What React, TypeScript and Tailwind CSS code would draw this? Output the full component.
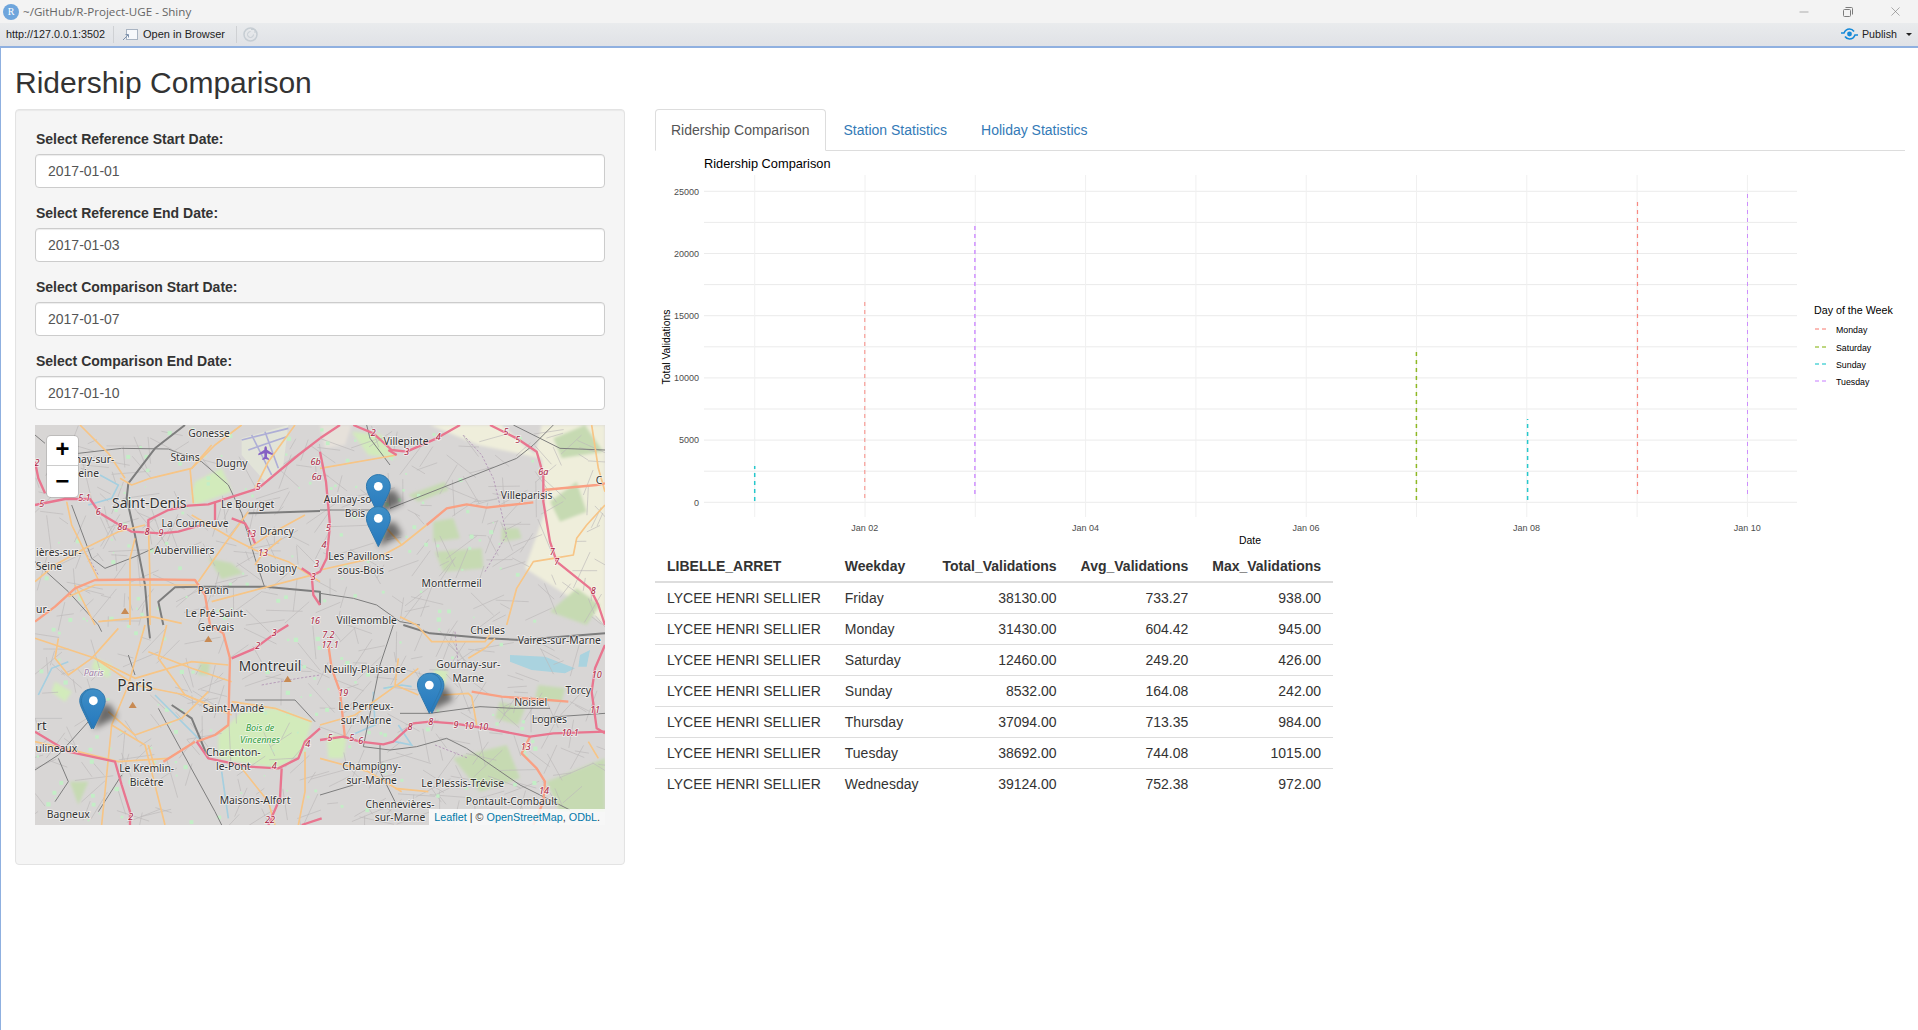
import { Minus, X } from "lucide-react";

const fields = [
  { label: "Select Reference Start Date:", value: "2017-01-01" },
  { label: "Select Reference End Date:", value: "2017-01-03" },
  { label: "Select Comparison Start Date:", value: "2017-01-07" },
  { label: "Select Comparison End Date:", value: "2017-01-10" },
];

const rows = [
  ["Friday", "38130.00", "733.27", "938.00"],
  ["Monday", "31430.00", "604.42", "945.00"],
  ["Saturday", "12460.00", "249.20", "426.00"],
  ["Sunday", "8532.00", "164.08", "242.00"],
  ["Thursday", "37094.00", "713.35", "984.00"],
  ["Tuesday", "38692.00", "744.08", "1015.00"],
  ["Wednesday", "39124.00", "752.38", "972.00"],
];

// map is traced at 3x: viewBox 1710 x 1200 for a 570 x 400 box
const cream = "1185,0 1400,0 1500,90 1520,0 1710,0 1710,600 1640,540 1470,430 1530,260 1520,100 1330,60";

const forest = [
  "520,400 590,415 625,445 560,462",
  "1195,290 1255,280 1275,340 1195,350",
  "1200,380 1340,370 1345,430 1225,440",
  "1120,210 1230,170 1240,195 1150,230",
  "1555,40 1650,0 1705,80 1580,100",
  "1545,230 1625,170 1655,260 1575,290",
  "1625,490 1695,540 1655,600 1545,560",
  "1400,310 1450,310 1460,340 1400,350",
  "1255,1000 1415,960 1455,1060 1335,1100",
  "1535,1070 1710,1000 1710,1160 1575,1160",
  "1510,780 1590,790 1580,830 1500,820",
  "1395,830 1470,850 1450,900 1380,880",
  "495,710 525,715 520,750 490,750",
  "105,1070 160,1070 130,1140",
];

const parks = [
  "620,860 720,850 830,890 800,990 725,1030 550,1000 550,930",
  "470,210 480,170 560,130 590,200 480,240",
  "950,20 1040,30 1080,100 1000,90",
  "875,930 935,935 925,1000 880,1000",
  "1200,730 1240,740 1225,790 1190,780",
  "180,700 230,720 220,760 170,730",
  "60,770 110,800 90,830 50,800",
];

const waterLines = [
  "195,150 250,180 230,220 160,240",
  "1015,800 1020,900 950,930",
  "560,1040 580,1180",
  "10,810 50,730 100,710",
  "1045,790 1100,780 1130,785",
  "1080,950 1130,960 1090,900",
  "360,810 420,870 500,950",
];

const orange = [
  "135,0 220,85 270,160",
  "530,60 470,130 345,160 290,180 255,160",
  "465,130 475,235",
  "620,0 540,60 470,130",
  "95,230 110,300 130,340 190,465",
  "340,290 345,465 345,600",
  "285,600 285,400 300,340",
  "0,470 60,420 150,370 250,320 330,300",
  "490,470 560,370 640,260",
  "470,270 590,340 660,375 760,410 855,470",
  "780,0 700,110 660,190",
  "740,340 680,390 660,420",
  "810,270 700,330 640,370",
  "530,530 850,445",
  "100,515 180,480 350,480 490,480",
  "190,590 350,575 440,595",
  "120,480 180,600",
  "855,130 1085,90",
  "855,435 1035,395 1100,360 1175,300",
  "1055,310 1100,360",
  "1710,240 1655,300 1625,340 1615,390 1555,400 1495,410 1445,490 1415,600",
  "1670,0 1690,130 1710,200",
  "1095,575 1145,600 1190,650 1350,650 1370,620",
  "0,640 180,700 300,760 470,710 580,720",
  "70,640 60,700 100,750 170,700 250,610",
  "330,600 280,780 230,900 200,1200",
  "590,870 450,810 300,780 180,700",
  "220,860 300,930 440,880 520,800",
  "230,900 330,960 390,1200",
  "0,950 130,980 250,1010 400,1000 480,950",
  "340,960 360,1030",
  "525,840 450,810 370,700 395,600",
  "590,770 470,730 340,680",
  "590,830 720,850 830,890",
  "620,1030 700,1130 720,1200",
  "810,980 810,1100 790,1200",
  "855,900 960,870 1100,770 1150,730",
  "1090,700 1080,780 1150,810",
  "855,1000 1000,1040 1100,1100",
  "1080,1090 1180,1100",
  "1225,810 1300,805 1310,815 1325,900",
  "1380,640 1350,670 1300,700",
  "1660,950 1690,1000",
];

const salmon = [
  "0,590 60,545 120,490 180,465 350,463 480,465 510,510 525,600 565,625",
  "1175,300 1235,250 1295,238 1355,248 1495,232",
  "1525,195 1685,180 1710,175",
  "385,1010 480,950",
  "565,625 585,700 580,900 540,930 485,950",
  "1310,800 1400,815 1540,825 1600,830",
  "1485,935 1460,985 1505,1030 1530,1070 1525,1130 1495,1200",
  "880,660 890,730 915,800 930,940",
];

const pink = [
  "0,110 10,160 30,205",
  "0,240 90,222 165,222 195,265 245,295 290,320 380,325 430,320 500,300",
  "340,320 340,285 400,255 460,242 520,238 670,190 790,90 855,40",
  "540,230 540,285",
  "590,280 630,295 650,330 660,355",
  "800,430 830,450 835,510 855,540",
  "855,80 873,170 885,300 875,400 855,440 835,450",
  "855,40 915,0",
  "955,0 1015,25 1070,75 1115,80 1205,40 1275,0",
  "1365,0 1445,40 1505,80 1525,150 1525,230 1545,350 1565,410 1665,490 1690,540 1710,600",
  "1710,660 1680,730 1670,800 1685,910 1710,925",
  "855,945 925,935 975,950 1045,958 1075,950 1135,895 1185,890 1255,895 1365,912 1485,935 1555,925 1710,920",
  "590,700 660,670 720,625 760,600",
  "0,920 100,980 240,1010 260,1080 285,1160 285,1200",
  "485,950 520,1000 640,1025 730,1030 790,1000 810,950 855,910",
  "740,1030 735,1120 700,1200",
  "860,1180 800,1200",
  "1085,90 1060,75",
];

const rail = [
  "0,30 30,55",
  "130,85 260,70 400,72 500,110 580,180 620,265",
  "355,370 300,395 210,430 170,400 110,240",
  "620,265 660,400 690,490",
  "0,410 100,500 190,600 200,620",
  "1555,0 1495,60 1445,100 1065,250",
  "855,255 1055,255",
  "1065,120 1005,40 995,0",
  "855,505 955,520 1025,540 1095,590 1155,600",
  "1435,0 1575,70 1710,75",
  "280,690 300,750",
  "370,850 540,1160 560,1200",
  "630,825 780,825 840,890",
  "160,890 70,990 0,1035",
  "70,1000 100,1070 60,1130",
  "260,1050 190,1160",
  "1095,865 1185,865 1335,845 1435,850 1545,850",
  "985,965 1065,975 1145,965 1235,940 1295,970 1455,1080 1605,1155",
  "855,1110 955,1080",
  "1075,600 1035,720 985,965",
  "1035,960 1035,1040 1085,1140",
  "1495,880 1710,865",
];

const railThick = [
  "450,0 360,70 280,175 275,220 300,330 330,480 340,600 345,640",
  "385,600 370,530 420,487 490,485 690,485 855,500 855,540",
  "640,265 855,258",
  "410,840 470,880 520,1000",
  "1105,600 1185,625 1355,640 1455,645 1710,625",
];

const boundary = [
  "1285,30 1340,90 1375,160 1390,220 1415,330 1350,440",
  "150,380 190,450",
  "1260,620 1270,720",
  "680,780 790,760 855,750",
  "1200,960 1300,1000",
];

const places: [string, number, number, number?][] = [
  ["Gonesse", 522, 25], ["Stains", 450, 97], ["Dugny", 590, 115],
  ["Saint-Denis", 343, 235, 42], ["Le Bourget", 638, 238], ["La Courneuve", 480, 295],
  ["Drancy", 725, 320], ["Aubervilliers", 448, 375], ["Seine", 42, 423], ["Bobigny", 725, 430],
  ["Pantin", 535, 495], ["Le Pré-Saint-", 543, 565], ["Gervais", 543, 608], ["ur-", 24, 553],
  ["Villepinte", 1113, 48], ["Aulnay-sous-", 960, 222], ["Bois", 960, 265],
  ["Villeparisis", 1475, 210], ["Les Pavillons-", 977, 395], ["sous-Bois", 977, 437],
  ["Montfermeil", 1250, 475], ["Villemomble", 995, 585], ["C", 1692, 165],
  ["Paris", 300, 780, 46], ["Montreuil", 705, 722, 41], ["Saint-Mandé", 595, 850],
  ["rt", 20, 900, 38], ["ulineaux", 64, 970], ["Charenton-", 595, 983], ["le-Pont", 595, 1025],
  ["Le Kremlin-", 335, 1030], ["Bicêtre", 335, 1072], ["Maisons-Alfort", 660, 1125], ["Bagneux", 100, 1168],
  ["Chelles", 1358, 615], ["Vaires-sur-Marne", 1573, 647], ["Gournay-sur-", 1300, 718], ["Marne", 1300, 760],
  ["Neuilly-Plaisance", 990, 732], ["Le Perreux-", 993, 845], ["sur-Marne", 993, 887],
  ["Noisiel", 1487, 832], ["Torcy", 1630, 795], ["Lognes", 1543, 882],
  ["Champigny-", 1010, 1025], ["sur-Marne", 1010, 1066], ["Le Plessis-Trévise", 1283, 1075],
  ["Pontault-Combault", 1430, 1130], ["Chennevières-", 1095, 1138], ["sur-Marne", 1095, 1178],
];

const shields: [string, number, number][] = [
  ["2", 6, 115], ["5", 20, 237], ["5.1", 148, 218], ["6", 190, 262], ["8a", 262, 305], ["8", 336, 322],
  ["9", 378, 325], ["13", 648, 328], ["13", 684, 385], ["5", 670, 187], ["3", 845, 418], ["3", 835, 455],
  ["6b", 842, 110], ["6a", 845, 155], ["16", 840, 588], ["2", 1015, 25], ["4", 1210, 35], ["3", 1115, 80],
  ["5", 1413, 22], ["5", 1448, 45], ["6a", 1525, 142], ["5", 880, 308], ["4", 867, 360], ["7", 1552, 380],
  ["7", 1565, 410], ["8", 1675, 497], ["3", 718, 625], ["2", 668, 662], ["4", 818, 957], ["4", 718, 1022],
  ["22", 705, 1185], ["2", 287, 1175], ["7.2", 880, 630], ["17.1", 885, 660], ["19", 925, 805], ["5", 885, 940],
  ["5", 950, 938], ["6", 977, 948], ["8", 1125, 907], ["8", 1187, 892], ["9", 1263, 900], ["10", 1302, 904],
  ["10", 1345, 907], ["13", 1472, 965], ["14", 1527, 1097], ["10.1", 1605, 925], ["10", 1685, 750], ["11", 1680, 855],
];

// faint street mesh and little green specks, seeded so every run draws the same map
const seeded = (n: number) => {
  let s = 7;
  const out: number[] = [];
  for (let i = 0; i < n; i++) {
    s = (s * 16807) % 2147483647;
    out.push(s / 2147483647);
  }
  return out;
};
const noise = seeded(2400);
const streets = Array.from({ length: 520 }, (_, i) => {
  const x = noise[i * 4] * 1710;
  const y = noise[i * 4 + 1] * 1200;
  const a = noise[i * 4 + 2] * Math.PI;
  const l = 30 + noise[i * 4 + 3] * 90;
  return `M${x} ${y}L${x + Math.cos(a) * l} ${y + Math.sin(a) * l}`;
}).join("");
const specks = Array.from({ length: 230 }, (_, i) => ({
  x: noise[2100 + i] * 1500,
  y: noise[1800 + i] * 1200,
  s: 4 + noise[1500 + i] * 9,
}));

const Pin = ({ x, top }: { x: number; top: number }) => (
  <g transform={`translate(${x - 37.5} ${top}) scale(3)`}>
    <path
      d="M12.5 .6C5.8 .6 .6 5.9 .6 12.4c0 3.4 1.500 6.700 3.200 10.200L12.500 40.600l8.700-18c1.700-3.500 3.200-6.800 3.200-10.200C24.400 5.900 19.200 .6 12.500 .6z"
      fill="url(#pinFill)"
      stroke="#2f78ad"
      strokeWidth="1"
    />
    <circle cx="12.5" cy="12.4" r="4.4" fill="#fff" />
  </g>
);

const PinShadow = ({ x, tip }: { x: number; tip: number }) => (
  <polygon
    points={`${x},${tip} ${x + 22},${tip - 72} ${x + 50},${tip - 74} ${x + 72},${tip - 36}`}
    fill="#000"
    opacity="0.5"
    filter="url(#pinBlur)"
  />
);

const MapTiles = () => (
  <svg viewBox="0 0 1710 1200" className="block h-[400px] w-[570px] font-['Noto_Sans',sans-serif]">
    <defs>
      <linearGradient id="pinFill" x1="0" y1="0" x2="0" y2="1">
        <stop offset="0" stopColor="#3f8fc7" />
        <stop offset="1" stopColor="#2578bd" />
      </linearGradient>
      <filter id="pinBlur" x="-50%" y="-50%" width="200%" height="200%">
        <feGaussianBlur stdDeviation="9" />
      </filter>
      <filter id="soft" x="0" y="0" width="100%" height="100%">
        <feGaussianBlur stdDeviation="1.200" />
      </filter>
      <filter id="softLand" x="0" y="0" width="100%" height="100%">
        <feGaussianBlur stdDeviation="5" />
      </filter>
    </defs>
    <rect width="1710" height="1200" fill="#d8d6d5" />
    <g filter="url(#softLand)">
      <polygon points={cream} fill="#efeedb" />
      <polygon points="855,0 950,0 930,60 870,70" fill="#e6e1da" />
      {forest.map((p) => (
        <polygon key={p} points={p} fill="#c6dab2" />
      ))}
      {parks.map((p) => (
        <polygon key={p} points={p} fill="#d2ebbb" />
      ))}
    </g>
    <g filter="url(#soft)">
      <polygon points="1425,690 1530,695 1620,730 1590,745 1490,735 1425,710" fill="#aad3df" />
      <polygon points="1635,690 1665,675 1655,725 1630,725" fill="#aad3df" />
      <path d={streets} stroke="#bcbab9" strokeWidth="2" fill="none" />
      {specks.map((k, i) => (
        <rect key={i} x={k.x} y={k.y} width={k.s} height={k.s} fill="#c3eec6" />
      ))}
      {waterLines.map((p) => (
        <polyline key={p} points={p} fill="none" stroke="#a5cfe0" strokeWidth="5" />
      ))}
      <polygon points="620,40 760,0 745,120 690,170 620,90" fill="#e2e4d8" />
      <path d="M620 45L760 10M640 75L755 35M650 30L710 150M690 20L730 130" stroke="#aeaed6" strokeWidth="5" />
      <path
        d="M692 64c3 0 4 4 4 10l18 12v5l-18-6v11l6 5v4l-10-3-10 3v-4l6-5V85l-18 6v-5l18-12c0-6 1-10 4-10z"
        fill="#8461c4"
      />
      {boundary.map((p) => (
        <polyline key={p} points={p} fill="none" stroke="#b59bb8" strokeWidth="3" strokeDasharray="7 5" />
      ))}
      {rail.map((p) => (
        <polyline key={p} points={p} fill="none" stroke="#7d7d7d" strokeWidth="3" strokeLinejoin="round" />
      ))}
      {railThick.map((p) => (
        <polyline key={p} points={p} fill="none" stroke="#7d7d7d" strokeWidth="6" strokeLinejoin="round" />
      ))}
      {orange.map((p) => (
        <polyline key={p} points={p} fill="none" stroke="#f7c586" strokeWidth="5" strokeLinejoin="round" />
      ))}
      {salmon.map((p) => (
        <polyline key={p} points={p} fill="none" stroke="#f9a083" strokeWidth="7" strokeLinejoin="round" />
      ))}
      {pink.map((p) => (
        <polyline key={p} points={p} fill="none" stroke="#e9758f" strokeWidth="7" strokeLinejoin="round" />
      ))}
      {[
        [270, 558],
        [520, 642],
        [293, 840],
        [758, 762],
      ].map(([x, y]) => (
        <polygon key={x} points={`${x},${y - 10} ${x + 12},${y + 9} ${x - 12},${y + 9}`} fill="#c88a52" />
      ))}
    </g>
    <g textAnchor="middle" style={{ paintOrder: "stroke" }} stroke="#ffffff" strokeOpacity="0.6" strokeWidth="5">
      {shields.map(([t, x, y]) => (
        <text key={`${t}${x}`} x={x} y={y + 9} fontSize="27" fontStyle="italic" fill="#a8233f">
          {t}
        </text>
      ))}
      {places.map(([t, x, y, size]) => (
        <text key={`${t}${x}`} x={x} y={y + (size ?? 31) * 0.36} fontSize={size ?? 31} fill="#333">
          {t}
        </text>
      ))}
      <text x="238" y="115" textAnchor="end" fontSize="31" fill="#333">
        nay-sur-
      </text>
      <text x="192" y="157" textAnchor="end" fontSize="31" fill="#333">
        eine
      </text>
      <text x="140" y="392" textAnchor="end" fontSize="31" fill="#333">
        ières-sur-
      </text>
      <text x="176" y="754" fontSize="27" fontStyle="italic" fill="#a283a8">
        Paris
      </text>
      <text x="675" y="917" fontSize="27" fontStyle="italic" fill="#2d9a3c">
        Bois de
      </text>
      <text x="675" y="954" fontSize="27" fontStyle="italic" fill="#2d9a3c">
        Vincennes
      </text>
    </g>
    <PinShadow x={1030} tip={270} />
    <PinShadow x={1030} tip={366} />
    <PinShadow x={1183} tip={860} />
    <PinShadow x={175} tip={912} />
    <Pin x={1030} top={147} />
    <Pin x={1030} top={243} />
    <Pin x={1191} top={743} />
    <Pin x={1183} top={743} />
    <Pin x={170} top={790} />
    <Pin x={175} top={790} />
  </svg>
);

const vLines = Array.from({ length: 10 }, (_, i) => 754.7 + i * 110.3);
const hLines = Array.from({ length: 11 }, (_, i) => 502.3 - i * 31.1);

const series = [
  { x: 754.7, y1: 466, y2: 501, color: "#00BFC4", w: 1.5 },
  { x: 864.8, y1: 302, y2: 498, color: "#F8766D", w: 1 },
  { x: 974.9, y1: 226, y2: 494, color: "#C77CFF", w: 1.5 },
  { x: 1416.4, y1: 351, y2: 500, color: "#7CAE00", w: 1.5 },
  { x: 1527.6, y1: 419, y2: 500, color: "#00BFC4", w: 1.5 },
  { x: 1637.5, y1: 202, y2: 494, color: "#F8766D", w: 1.2 },
  { x: 1747.5, y1: 193, y2: 494, color: "#C77CFF", w: 1 },
];

const legend = [
  { name: "Monday", y: 329, color: "#F8766D" },
  { name: "Saturday", y: 347, color: "#7CAE00" },
  { name: "Sunday", y: 364, color: "#00BFC4" },
  { name: "Tuesday", y: 381, color: "#C77CFF" },
];

const RidershipChart = () => (
  <svg viewBox="655 151 1250 400" className="block h-[400px] w-[1250px]">
    <text x="704" y="168" fontSize="12.8" fill="#000">
      Ridership Comparison
    </text>
    {hLines.map((y) => (
      <line key={y} x1="704" x2="1797" y1={y} y2={y} stroke="#ebebeb" strokeWidth="1" />
    ))}
    {vLines.map((x) => (
      <line key={x} x1={x} x2={x} y1="175" y2="517" stroke="#f0f0f0" strokeWidth="1" />
    ))}
    {series.map((s) => (
      <line
        key={s.x}
        x1={s.x}
        x2={s.x}
        y1={s.y2}
        y2={s.y1}
        stroke={s.color}
        strokeOpacity="0.85"
        strokeWidth={s.w}
        strokeDasharray="4 4"
      />
    ))}
    {["0", "5000", "10000", "15000", "20000", "25000"].map((t, i) => (
      <text key={t} x="699" y={502.3 - i * 62.2 + 3.2} textAnchor="end" fontSize="9" fill="#4d4d4d">
        {t}
      </text>
    ))}
    {["Jan 02", "Jan 04", "Jan 06", "Jan 08", "Jan 10"].map((t, i) => (
      <text key={t} x={864.8 + i * 220.6} y="531" textAnchor="middle" fontSize="9" fill="#4d4d4d">
        {t}
      </text>
    ))}
    <text x="1250" y="544" textAnchor="middle" fontSize="10.4" fill="#000">
      Date
    </text>
    <text x="669.5" y="347" textAnchor="middle" fontSize="10.4" fill="#000" transform="rotate(-90 669.5 347)">
      Total Validations
    </text>
    <text x="1814" y="314" fontSize="10.7" fill="#000">
      Day of the Week
    </text>
    {legend.map((l) => (
      <g key={l.name}>
        <line x1="1815" x2="1828" y1={l.y} y2={l.y} stroke={l.color} strokeWidth="1" strokeDasharray="4 3" />
        <text x="1836" y={l.y + 4} fontSize="8.8" fill="#000">
          {l.name}
        </text>
      </g>
    ))}
  </svg>
);

const TitleBar = () => (
  <div className="flex h-[23px] items-center bg-[#f3f3f3] pl-[3px] font-['Open_Sans',sans-serif] text-[11.6px] text-[#666]">
    <div className="flex h-[16px] w-[16px] items-center justify-center rounded-full bg-[#6ea5dc] font-['Liberation_Serif',serif] text-[10px] text-white">
      R
    </div>
    <span className="ml-[4px]">~/GitHub/R-Project-UGE - Shiny</span>
    <div className="ml-auto flex items-center pr-[15px] text-[#7c7c7c]">
      <Minus size={14} strokeWidth={1} />
      <svg width="10" height="10" viewBox="0 0 10 10" className="ml-[32px]">
        <rect x=".5" y="2.5" width="7" height="7" rx="1" fill="none" stroke="currentColor" />
        <path d="M2.500 .5H8.500a1 1 0 0 1 1 1V7.500" fill="none" stroke="currentColor" />
      </svg>
      <X size={15} strokeWidth={1} className="ml-[35px]" />
    </div>
  </div>
);

const ToolBar = () => (
  <div className="flex h-[23px] items-center bg-gradient-to-b from-[#e9ebed] to-[#e0e2e6] pl-[6px] text-[10.8px] text-[#222]">
    <span>http://127.0.0.1:3502</span>
    <div className="ml-[8px] h-[17px] w-px bg-[#cfd1d4]" />
    <svg width="16" height="14" viewBox="0 0 16 14" className="ml-[8px]">
      <rect x="4.5" y="1.5" width="11" height="10" fill="#f6f8fb" stroke="#a9b4c2" />
      <path d="M1 12l5-5M3.500 6.500H6.500V9.500" stroke="#7f93ad" fill="none" />
    </svg>
    <span className="ml-[5px] text-[11px]">Open in Browser</span>
    <div className="ml-[11px] h-[17px] w-px bg-[#cfd1d4]" />
    <svg width="15" height="15" viewBox="0 0 15 15" className="ml-[6px]">
      <circle cx="7.5" cy="7.5" r="6.5" fill="none" stroke="#c6cdd3" strokeWidth="1.5" />
      <path d="M7.500 4.500a3 3 0 1 0 3 3M8 2.500h4V6" fill="none" stroke="#c6cdd3" />
    </svg>
    <div className="ml-auto flex items-center pr-[6px]">
      <svg width="17" height="12" viewBox="0 0 17 12">
        <circle cx="8.5" cy="6" r="2.4" fill="#1489d8" />
        <path d="M0 5h3C4 2.500 6 1 8.500 1S12 2 13 3.500M17 7h-3c-1 2.500-3 4-5.500 4S5 10 4 8.500" fill="none" stroke="#1489d8" strokeWidth="1.6" />
      </svg>
      <span className="ml-[4px] text-[10.7px]">Publish</span>
      <div className="ml-[9px] h-0 w-0 border-x-[3px] border-t-[3px] border-x-transparent border-t-[#222]" />
    </div>
  </div>
);

const DateField = ({ label, value }: { label: string; value: string }) => (
  <div className="mb-[15px]">
    <label className="mb-[5px] ml-[1px] block h-[20px] text-[14px] leading-[20px] font-bold text-[#333]">{label}</label>
    <input
      readOnly
      value={value}
      className="block h-[34px] w-full rounded-[4px] border border-[#ccc] bg-white px-[12px] text-[14px] text-[#555] shadow-[inset_0_1px_1px_rgba(0,0,0,0.075)]"
    />
  </div>
);

const LeafletMap = () => (
  <div className="relative h-[400px] w-[570px] overflow-hidden">
    <MapTiles />
    <div className="absolute top-[11px] left-[12px] w-[31px] overflow-hidden rounded-[4px] bg-white shadow-[0_0_0_1px_rgba(0,0,0,0.12)]">
      <div className="flex h-[30px] items-center justify-center border-b border-[#ccc] pt-[1px] font-['Liberation_Mono',monospace] text-[24px] font-bold text-black">
        +
      </div>
      <div className="flex h-[31px] items-center justify-center pt-[2px] font-['Liberation_Mono',monospace] text-[24px] font-bold text-black">
        −
      </div>
    </div>
    <div className="absolute right-0 bottom-0 bg-white/80 px-[5px] text-[10.8px] leading-[16px] text-[#333]">
      <span className="text-[#0078a8]">Leaflet</span> | © <span className="text-[#0078a8]">OpenStreetMap</span>,{" "}
      <span className="text-[#0078a8]">ODbL</span>.
    </div>
  </div>
);

const Tabs = () => (
  <div className="flex h-[42px] border-b border-[#ddd] text-[14px] leading-[20px]">
    <div className="h-[42px] rounded-t-[4px] border border-[#ddd] border-b-white bg-white px-[15px] py-[10px] text-[#555]">
      Ridership Comparison
    </div>
    <div className="ml-[3px] px-[15px] pt-[11px] text-[#337ab7]">Station Statistics</div>
    <div className="ml-[4px] px-[15px] pt-[11px] text-[#337ab7]">Holiday Statistics</div>
  </div>
);

const SummaryTable = () => (
  <table className="w-[678px] border-collapse text-[14px] leading-[20px] whitespace-nowrap text-[#333]">
    <thead>
      <tr className="border-b-2 border-[#ddd] font-bold">
        <th className="w-[178px] px-[12px] py-[5px] text-left">LIBELLE_ARRET</th>
        <th className="w-[97px] px-[12px] py-[5px] text-left">Weekday</th>
        <th className="w-[138px] px-[12px] py-[5px] text-right">Total_Validations</th>
        <th className="w-[132px] px-[12px] py-[5px] text-right">Avg_Validations</th>
        <th className="w-[133px] px-[12px] py-[5px] text-right">Max_Validations</th>
      </tr>
    </thead>
    <tbody>
      {rows.map(([day, total, avg, max]) => (
        <tr key={day} className="border-b border-[#ddd] last:border-b-0">
          <td className="px-[12px] py-[5px]">LYCEE HENRI SELLIER</td>
          <td className="px-[12px] py-[5px]">{day}</td>
          <td className="px-[12px] py-[5px] text-right">{total}</td>
          <td className="px-[12px] py-[5px] text-right">{avg}</td>
          <td className="px-[12px] py-[5px] text-right">{max}</td>
        </tr>
      ))}
    </tbody>
  </table>
);

export default function App() {
  return (
    <div className="min-h-[1030px] bg-white font-['Liberation_Sans',Arial,sans-serif]">
      <TitleBar />
      <ToolBar />
      <div className="min-h-[984px] border-t-2 border-l border-t-[#8fb0e0] border-l-[#8fb0e0] pr-[13px] pl-[14px]">
        <h2 className="pt-[18px] pb-[10px] text-[30px] leading-[33px] font-normal text-[#333]">Ridership Comparison</h2>
        <div className="flex items-start gap-[30px]">
          <div className="h-[756px] w-[610px] shrink-0 rounded-[4px] border border-[#e3e3e3] bg-[#f5f5f5] p-[19px] shadow-[inset_0_1px_1px_rgba(0,0,0,0.05)]">
            {fields.map((f) => (
              <DateField key={f.label} {...f} />
            ))}
            <LeafletMap />
          </div>
          <div className="min-w-0 flex-1">
            <Tabs />
            <RidershipChart />
            <SummaryTable />
          </div>
        </div>
      </div>
    </div>
  );
}
